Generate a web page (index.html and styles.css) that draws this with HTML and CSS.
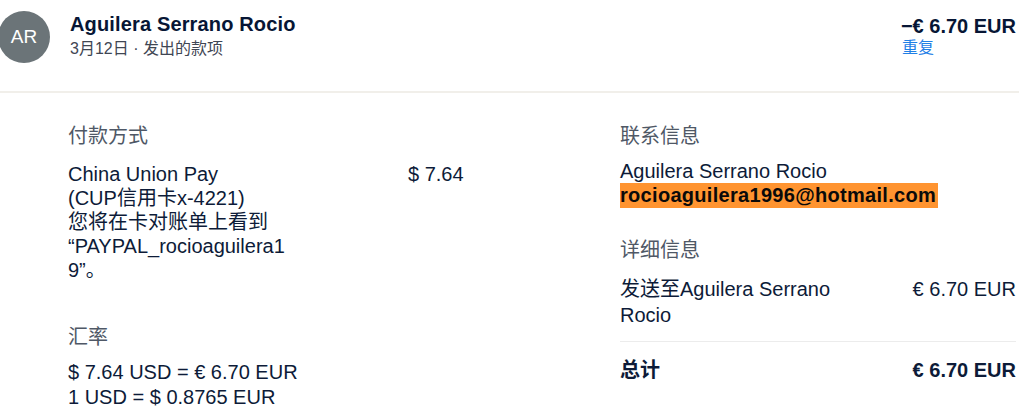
FILE: index.html
```html
<!DOCTYPE html>
<html lang="zh">
<head>
<meta charset="utf-8">
<title>交易详情</title>
<link rel="stylesheet" href="styles.css">
</head>
<body>
<div class="page">
  <header class="head">
    <div class="avatar">AR</div>
    <div class="who">
      <div class="name">Aguilera Serrano Rocio</div>
      <div class="sub">3月12日 · 发出的款项</div>
    </div>
    <div class="amt">
      <div class="amt-value">−€ 6.70 EUR</div>
      <a class="link" href="#">重复</a>
    </div>
  </header>
  <main class="body">
    <section class="left">
      <h3 class="label">付款方式</h3>
      <div class="pay">
        <div class="desc">
          <div>China Union Pay</div>
          <div>(CUP信用卡x-4221)</div>
          <div>您将在卡对账单上看到“PAYPAL_rocioaguilera19”。</div>
        </div>
        <div class="pay-amt">$ 7.64</div>
      </div>
      <h3 class="label rate-label">汇率</h3>
      <div class="rates">
        <div>$ 7.64 USD = € 6.70 EUR</div>
        <div>1 USD = $ 0.8765 EUR</div>
      </div>
    </section>
    <section class="right">
      <h3 class="label">联系信息</h3>
      <div class="contact">
        <div>Aguilera Serrano Rocio</div>
        <div><span class="email">rocioaguilera1996@hotmail.com</span></div>
      </div>
      <h3 class="label detail-label">详细信息</h3>
      <div class="row detail-row">
        <div class="row-desc">发送至Aguilera Serrano Rocio</div>
        <div class="row-amt">€ 6.70 EUR</div>
      </div>
      <div class="row total-row">
        <div class="row-desc">总计</div>
        <div class="row-amt">€ 6.70 EUR</div>
      </div>
    </section>
  </main>
</div>
</body>
</html>
```
FILE: styles.css
```css
html, body {
  margin: 0;
  padding: 0;
  background: #ffffff;
}

body {
  font-family: "Liberation Sans", "Noto Sans CJK SC", sans-serif;
  color: #0d1b38;
  font-size: 20px;
  line-height: 24px;
}

.page {
  width: 1019px;
  height: 409px;
  overflow: hidden;
}

.head {
  display: flex;
  align-items: flex-start;
  height: 91px;
  border-bottom: 2px solid #f1efea;
  box-sizing: content-box;
  padding-right: 3px;
}

.avatar {
  width: 52px;
  height: 52px;
  margin-left: -2px;
  margin-top: 11px;
  border-radius: 50%;
  background: #6b7478;
  color: #ffffff;
  font-size: 19px;
  display: flex;
  align-items: center;
  justify-content: center;
  flex-shrink: 0;
}

.who {
  margin-left: 20px;
  padding-top: 12px;
}

.name {
  font-weight: bold;
  font-size: 20px;
  line-height: 24px;
  letter-spacing: 0.15px;
  color: #071635;
}

.sub {
  margin-top: 4px;
  font-size: 16px;
  line-height: 18px;
  color: #3f4653;
}

.amt {
  margin-left: auto;
  padding-top: 14px;
  display: flex;
  flex-direction: column;
  align-items: flex-start;
}

.amt-value {
  font-weight: bold;
  font-size: 20px;
  line-height: 24px;
  color: #071635;
}

.link {
  margin-top: 1px;
  margin-left: 1px;
  font-size: 16px;
  line-height: 18px;
  color: #1f80e6;
  text-decoration: none;
}

.body {
  display: grid;
  grid-template-columns: 552px 396px;
  padding-left: 68px;
  padding-top: 31px;
}

.label {
  margin: 0;
  font-size: 20px;
  line-height: 24px;
  font-weight: normal;
  color: #4f5866;
}

.pay {
  margin-top: 14px;
  display: grid;
  grid-template-columns: 340px auto;
  align-items: start;
}

.desc {
  max-width: 222px;
  overflow-wrap: anywhere;
}

.rate-label {
  margin-top: 43px;
}

.rates {
  margin-top: 11px;
  line-height: 25px;
}

.contact {
  margin-top: 11px;
}

.email {
  display: inline-block;
  line-height: 25px;
  background: #ff9430;
  color: #0a0a0a;
  font-weight: bold;
  letter-spacing: 0.3px;
  padding-right: 2px;
}

.detail-label {
  margin-top: 30px;
}

.row {
  display: flex;
  justify-content: space-between;
  align-items: flex-start;
}

.detail-row {
  margin-top: 14px;
  line-height: 26px;
  padding-bottom: 13px;
  border-bottom: 1px solid #ececec;
}

.detail-row .row-desc {
  max-width: 240px;
}

.total-row {
  margin-top: 16px;
  font-weight: bold;
}
```
